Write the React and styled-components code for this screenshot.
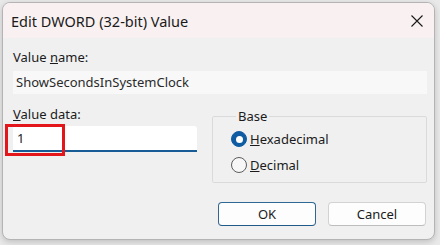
import styled, { createGlobalStyle } from 'styled-components';

const GlobalStyle = createGlobalStyle`
  html, body { margin: 0; padding: 0; }
  body {
    background: #e9e9e9;
    font-family: "Noto Sans", "Open Sans", sans-serif;
    color: #1b1b1b;
  }
`;

const Screen = styled.div`
  width: 440px;
  height: 245px;
  box-sizing: border-box;
  padding: 2px 5px 5px 2px;
  overflow: hidden;
`;

const Window = styled.div`
  width: 433px;
  height: 238px;
  box-sizing: border-box;
  border: 1px solid #b4b4b4;
  border-radius: 8px;
  background: #f0f0f0;
  overflow: hidden;
  display: flex;
  flex-direction: column;
  box-shadow: 0 2px 6px rgba(0, 0, 0, 0.18);
`;

const TitleBar = styled.div`
  height: 35px;
  flex: none;
  background: #f9f1f1;
  display: flex;
  align-items: center;
  justify-content: space-between;
  padding: 0 11px 0 8px;
`;

const Title = styled.span`
  font-size: 14.5px;
  color: #1a1a1a;
`;

const Content = styled.div`
  flex: 1;
  display: flex;
  flex-direction: column;
  padding: 11px 7px 13px 10px;
  font-size: 13px;
  line-height: 17px;
`;

const Label = styled.div`
  height: 17px;
  margin-top: ${p => p.$gap || 0}px;
`;

const ReadField = styled.div`
  height: 23px;
  margin-top: 5px;
  background: #f8f8f8;
  padding-left: 3px;
  display: flex;
  align-items: center;
  color: #2a2a2a;
`;

const Row = styled.div`
  display: grid;
  grid-template-columns: 184px 215px;
  column-gap: 15px;
  margin-top: 12px;
`;

const InputWrap = styled.div`
  position: relative;
  margin-top: 3px;
`;

const Input = styled.div`
  height: 24px;
  background: #ffffff;
  border-bottom: 2px solid #175c96;
  border-radius: 3px 3px 0 0;
  padding-left: 4px;
  display: flex;
  align-items: center;
`;

const Highlight = styled.div`
  position: absolute;
  left: -8px;
  top: -2px;
  width: 60px;
  height: 32px;
  box-sizing: border-box;
  border: 3px solid #e3161c;
`;

const Group = styled.fieldset`
  margin: 2px 0 0 0;
  padding: 1px 0 4px 18px;
  border: 1px solid #dadada;
  border-radius: 2px;
  min-width: 0;
`;

const Legend = styled.legend`
  padding: 0 2px;
  margin-left: 5px;
  line-height: 17px;
`;

const RadioRow = styled.div`
  height: 26px;
  display: flex;
  align-items: center;
  gap: 3px;
`;

const RadioDot = styled.span`
  width: 16px;
  height: 16px;
  box-sizing: border-box;
  border-radius: 50%;
  flex: none;
  display: flex;
  align-items: center;
  justify-content: center;
  background: ${p => (p.$on ? '#0f5ca3' : '#f7f7f7')};
  border: 1px solid ${p => (p.$on ? '#0f5ca3' : '#5c5c5c')};

  &::after {
    content: '';
    width: 7px;
    height: 7px;
    border-radius: 50%;
    background: #ffffff;
    display: ${p => (p.$on ? 'block' : 'none')};
  }
`;

const Buttons = styled.div`
  margin-top: auto;
  display: flex;
  justify-content: flex-end;
  gap: 12px;
  padding-right: 1px;
`;

const Button = styled.div`
  width: 98px;
  height: 24px;
  box-sizing: border-box;
  border-radius: 4px;
  background: #fdfdfd;
  border: 1px solid ${p => (p.$primary ? '#2f6793' : '#d2d2d2')};
  border-bottom-color: ${p => (p.$primary ? '#1f5a88' : '#bdbdbd')};
  display: flex;
  align-items: center;
  justify-content: center;
  color: #1b1b1b;
`;

function CloseIcon() {
  return (
    <svg width="12" height="12" viewBox="0 0 12 12">
      <path d="M0.5 0.5 L11.5 11.5 M11.5 0.5 L0.5 11.5" stroke="#1a1a1a" strokeWidth="1.1" fill="none" />
    </svg>
  );
}

export default function App() {
  return (
    <Screen>
      <GlobalStyle />
      <Window>
        <TitleBar>
          <Title>Edit DWORD (32-bit) Value</Title>
          <CloseIcon />
        </TitleBar>
        <Content>
          <Label>Value <u>n</u>ame:</Label>
          <ReadField>ShowSecondsInSystemClock</ReadField>
          <Row>
            <div>
              <Label><u>V</u>alue data:</Label>
              <InputWrap>
                <Input>1</Input>
                <Highlight />
              </InputWrap>
            </div>
            <Group>
              <Legend>Base</Legend>
              <RadioRow>
                <RadioDot $on />
                <span><u>H</u>exadecimal</span>
              </RadioRow>
              <RadioRow>
                <RadioDot />
                <span><u>D</u>ecimal</span>
              </RadioRow>
            </Group>
          </Row>
          <Buttons>
            <Button $primary>OK</Button>
            <Button>Cancel</Button>
          </Buttons>
        </Content>
      </Window>
    </Screen>
  );
}
